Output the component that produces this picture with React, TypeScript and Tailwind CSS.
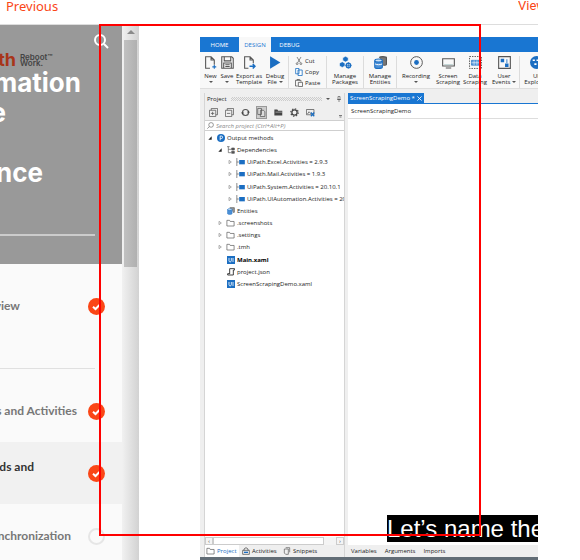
import type { ReactNode } from "react";

type IconProps = { children: ReactNode; className?: string; box?: string };

function Svg({ children, className = "size-3", box = "0 0 12 12" }: IconProps) {
  return (
    <svg viewBox={box} className={`shrink-0 ${className}`} fill="none" stroke="#555" aria-hidden="true">
      {children}
    </svg>
  );
}

const blue = "#1b6ec2";

const ribbonIcons = {
  fresh: (
    <Svg className="size-[13px]">
      <path d="M5.500 11.300h-4V.7h5l3 3V8M6.500.7v3h3" />
      <path d="M9.500 8.200v3.600M7.700 10h3.600" stroke={blue} />
    </Svg>
  ),
  save: (
    <Svg className="size-[13px]">
      <path d="M.7.7h9.200l1.400 1.400v9.200H.7z" />
      <path d="M3 .7v3.800h6V.7M2.500 11V6.500h7V11M4 8h4M4 9.700h4" />
    </Svg>
  ),
  exportTo: (
    <Svg className="size-[13px]">
      <path d="M5 11.300H1.500V.7h5l3 3v3M6.500.7v3h3" />
      <path d="M6 9.500h5M9 7.500l2 2-2 2" stroke={blue} strokeWidth="1.400" />
    </Svg>
  ),
  play: (
    <Svg className="size-[13px]">
      <path d="M1 .3 10.500 6 1 11.700z" fill={blue} stroke="none" />
    </Svg>
  ),
  packages: (
    <Svg className="size-[13px]">
      <path d="m6 .3 2.500 1.300v2.600L6 5.500 3.500 4.200V1.600zM3 5.300l2.500 1.300v2.600L3 10.500.5 9.200V6.600z" fill={blue} stroke="#fff" strokeWidth=".5" />
      <circle cx="8.700" cy="8.700" r="2" stroke={blue} strokeWidth="1.300" />
      <path d="M8.700 5.700v6M5.700 8.700h6" stroke={blue} strokeWidth=".7" />
    </Svg>
  ),
  entities: (
    <Svg className="size-[13px]">
      <path d="M5 1.500C5 .3 11.500.3 11.500 1.500v6c0 .8-2 1-3 1" fill="#777" />
      <path d="M.7 4.300v6c0 1.600 7 1.600 7 0v-6" fill="#4a8fd6" stroke={blue} />
      <ellipse cx="4.200" cy="4.200" rx="3.500" ry="1.400" fill="#cfe2f5" stroke={blue} />
      <path d="M1 7.300c1 1 5.500 1 6.500 0" stroke="#fff" strokeWidth=".9" />
    </Svg>
  ),
  record: (
    <Svg className="size-[13px]">
      <circle cx="6" cy="6" r="5.400" strokeWidth=".9" />
      <circle cx="6" cy="6" r="2.200" fill={blue} stroke="none" />
    </Svg>
  ),
  screen: (
    <Svg className="size-[13px]">
      <path d="M.6 2.500h10.800v6.800H.6zM3.500 11h5" />
      <path d="M2 8h8" stroke="#9bb" strokeWidth=".6" />
    </Svg>
  ),
  data: (
    <Svg className="size-[13px]">
      <path d="M.5.5h11v11H.5z" strokeDasharray="1.300 1" strokeWidth=".9" />
      <path d="M2.300 4h7.400v4.500H2.300z" fill="#5b9bdc" stroke={blue} strokeWidth=".6" />
      <path d="M4.700 4v4.500M7.300 4v4.500M2.300 6.200h7.400" stroke="#fff" strokeWidth=".5" />
    </Svg>
  ),
  events: (
    <Svg className="size-[13px]">
      <path d="M.6.6h10.800v10.800H.6z" />
      <path d="M2.500 2.500h3.200v3.200H2.500zM6.500 7h3.200v3.200H6.500z" fill={blue} stroke="none" />
      <path d="M8.200 3v3.500" stroke={blue} strokeWidth=".8" />
    </Svg>
  ),
  explorer: (
    <Svg className="size-[13px]">
      <circle cx="6" cy="6" r="6" fill={blue} stroke="none" />
      <path d="M2.500 4h2M6 4h2M4 7.500h2M7.500 7.500h2" stroke="#fff" strokeWidth="1.400" />
    </Svg>
  ),
};

function Caret() {
  return <span className="inline-block border-x-2 border-t-2 border-x-transparent border-t-[#555] align-middle" />;
}

type RibbonButtonProps = { icon: ReactNode; top: string; bottom?: string; caret?: boolean; width: string };

function RibbonButton({ icon, top, bottom, caret, width }: RibbonButtonProps) {
  return (
    <button className={`flex shrink-0 flex-col items-center text-center whitespace-nowrap ${width}`}>
      {icon}
      <span className="mt-1 h-[6px]">{top}</span>
      <span className="h-[6px]">
        {bottom} {caret && <Caret />}
      </span>
    </button>
  );
}

function Separator() {
  return <span className="h-8 w-px shrink-0 bg-[#dcdcdc]" />;
}

function Ribbon() {
  return (
    <div className="flex h-[37px] shrink-0 border-b border-[#dedede] bg-[#f8f8f8] pt-1 pl-[3px]">
      <RibbonButton icon={ribbonIcons.fresh} top="New" caret width="w-[15px]" />
      <RibbonButton icon={ribbonIcons.save} top="Save" caret width="w-[18px]" />
      <RibbonButton icon={ribbonIcons.exportTo} top="Export as" bottom="Template" width="w-[26px]" />
      <RibbonButton icon={ribbonIcons.play} top="Debug" bottom="File" caret width="w-[26px]" />
      <Separator />
      <div className="flex w-[37px] shrink-0 flex-col gap-[2px] pl-[6px]">
        <button className="flex h-[9px] items-center gap-[2px]">
          <Svg className="size-2">
            <path d="M3 0l5 8.500M9 0 4 8.500" />
            <circle cx="3.200" cy="10" r="1.400" />
            <circle cx="8.800" cy="10" r="1.400" />
          </Svg>
          Cut
        </button>
        <button className="flex h-[9px] items-center gap-[2px]">
          <Svg className="size-2">
            <path d="M1 .7h5v8H1zM4.500 3h6.300v8.300H4.500z" fill="#fff" stroke={blue} strokeWidth="1.200" />
          </Svg>
          Copy
        </button>
        <button className="flex h-[9px] items-center gap-[2px]">
          <Svg className="size-2">
            <path d="M4 10.500H.7V2H9v2M3 2V.7h3.700V2M5 5h6.300v6.300H5z" strokeWidth="1.200" />
          </Svg>
          Paste
        </button>
      </div>
      <Separator />
      <RibbonButton icon={ribbonIcons.packages} top="Manage" bottom="Packages" width="w-[36px]" />
      <Separator />
      <RibbonButton icon={ribbonIcons.entities} top="Manage" bottom="Entities" width="w-[32px]" />
      <Separator />
      <RibbonButton icon={ribbonIcons.record} top="Recording" caret width="w-[38px]" />
      <RibbonButton icon={ribbonIcons.screen} top="Screen" bottom="Scraping" width="w-[26px]" />
      <RibbonButton icon={ribbonIcons.data} top="Data" bottom="Scraping" width="w-[28px]" />
      <RibbonButton icon={ribbonIcons.events} top="User" bottom="Events" caret width="w-[30px]" />
      <Separator />
      <RibbonButton icon={ribbonIcons.explorer} top="UI" bottom="Explorer" width="w-[32px]" />
    </div>
  );
}

const treeIcons = {
  root: (
    <Svg className="size-2">
      <circle cx="6" cy="6" r="6" fill={blue} stroke="none" />
      <path d="M4.800 9.500V3h1.700a1.800 1.800 0 0 1 0 3.800H5" stroke="#fff" strokeWidth="1.300" />
    </Svg>
  ),
  deps: (
    <Svg className="size-2">
      <path d="M0 1h4M2 1v9h4M2 5h4" />
      <path d="M7 3h4v3H7zM7 8h4v3H7z" fill="#555" />
    </Svg>
  ),
  pkg: (
    <Svg className="h-2 w-[9px]" box="0 0 13 12">
      <path d="M1 0v12M1 6h3" />
      <path d="M4.500 3H13v6.500H4.500z" fill={blue} stroke="none" />
    </Svg>
  ),
  entity: (
    <Svg className="size-2">
      <path d="M4 1h7v7H9" fill="#999" />
      <path d="M.7 4v6c0 1.600 7 1.600 7 0V4z" fill="#4a8fd6" stroke={blue} strokeWidth=".6" />
      <ellipse cx="4.200" cy="4" rx="3.500" ry="1.400" fill="#cfe2f5" stroke={blue} />
    </Svg>
  ),
  folder: (
    <Svg className="h-2 w-[9px]">
      <path d="M.6 10.500V2h4l1 1.700h5.800v6.800z" />
    </Svg>
  ),
  flow: (
    <Svg className="size-2">
      <path d="M0 0h12v12H0z" fill={blue} stroke="none" />
      <path d="M3 3v4c0 2.500 3.500 2.500 3.500 0V3M9 3v6" stroke="#fff" strokeWidth="1.200" />
    </Svg>
  ),
  json: (
    <Svg className="size-2">
      <path d="M4 9V1h7.500v2H9.500v7.500H1V8.500h3" strokeWidth="1.400" stroke="#333" />
    </Svg>
  ),
};

type Row = { label: string; icon: ReactNode; pad: string; arrow?: "open" | "closed"; bold?: boolean };

const rows: Row[] = [
  { label: "Output methods", icon: treeIcons.root, pad: "pl-[3px]", arrow: "open" },
  { label: "Dependencies", icon: treeIcons.deps, pad: "pl-[13px]", arrow: "open" },
  { label: "UiPath.Excel.Activities = 2.9.3", icon: treeIcons.pkg, pad: "pl-[23px]", arrow: "closed" },
  { label: "UiPath.Mail.Activities = 1.9.3", icon: treeIcons.pkg, pad: "pl-[23px]", arrow: "closed" },
  { label: "UiPath.System.Activities = 20.10.1", icon: treeIcons.pkg, pad: "pl-[23px]", arrow: "closed" },
  { label: "UiPath.UIAutomation.Activities = 20", icon: treeIcons.pkg, pad: "pl-[23px]", arrow: "closed" },
  { label: "Entities", icon: treeIcons.entity, pad: "pl-[13px]" },
  { label: ".screenshots", icon: treeIcons.folder, pad: "pl-[13px]", arrow: "closed" },
  { label: ".settings", icon: treeIcons.folder, pad: "pl-[13px]", arrow: "closed" },
  { label: ".tmh", icon: treeIcons.folder, pad: "pl-[13px]", arrow: "closed" },
  { label: "Main.xaml", icon: treeIcons.flow, pad: "pl-[13px]", bold: true },
  { label: "project.json", icon: treeIcons.json, pad: "pl-[13px]" },
  { label: "ScreenScrapingDemo.xaml", icon: treeIcons.flow, pad: "pl-[13px]" },
];

function ProjectTree() {
  return (
    <ul className="flex h-[158px] flex-col justify-between overflow-hidden">
      {rows.map((row) => (
        <li key={row.label} className={`flex h-3 items-center whitespace-nowrap ${row.pad}`}>
          <Svg className="mr-1 size-1" box="0 0 6 6">
            {row.arrow === "open" && <path d="M5.500.5v5h-5z" fill="#222" stroke="none" />}
            {row.arrow === "closed" && <path d="M1.500.5 5 3 1.500 5.500z" stroke="#888" />}
          </Svg>
          <span className="mr-[2px] flex w-[9px] justify-center">{row.icon}</span>
          <span className={row.bold ? "font-bold text-black" : ""}>{row.label}</span>
        </li>
      ))}
    </ul>
  );
}

function ProjectPanel() {
  return (
    <section className="flex w-[141px] shrink-0 flex-col border-x border-[#d5d5d5]">
      <div className="flex h-[12px] shrink-0 items-center gap-1 px-[2px]">
        <span>Project</span>
        <span className="h-1 flex-1 bg-[conic-gradient(#ccc_25%,transparent_0_50%,#ccc_0_75%,transparent_0)] bg-[size:2px_2px]" />
        <Caret />
        <Svg className="ml-[2px] size-[6px]">
          <path d="M4 1h4v6H4zM2 7h8M6 7v5" strokeWidth="1.300" />
        </Svg>
      </div>
      <div className="flex h-[15px] shrink-0 items-center">
        <button aria-label="Expand all" className="flex w-4 justify-center">
          <Svg className="size-[9px]">
            <path d="M3 3V.6h8.400V9H9M.6 3H9v8.400H.6zM4.800 5v4.400M2.600 7.200H7" />
          </Svg>
        </button>
        <button aria-label="Collapse all" className="flex w-4 justify-center">
          <Svg className="size-[9px]">
            <path d="M3 3V.6h8.400V9H9M.6 3H9v8.400H.6zM2.600 7.200H7" />
          </Svg>
        </button>
        <button aria-label="Refresh" className="flex w-4 justify-center">
          <Svg className="size-[9px]">
            <path d="M2 6a4 4 0 0 1 8 0M10 6a4 4 0 0 1-8 0" strokeWidth="1.500" />
            <path d="M0 6h4L2 8.500zM8 6h4l-2-2.500z" fill="#444" stroke="none" />
          </Svg>
        </button>
        <button
          aria-label="Show all files"
          className="mx-[3px] flex h-[13px] w-[11px] items-center justify-center border border-[#999] bg-[#ccc]"
        >
          <Svg className="size-[9px]">
            <path d="M1 .6h5v8H1zM4.500 3h4l2 2v6.400h-6z" fill="#ddd" />
          </Svg>
        </button>
        <button aria-label="Open folder" className="flex w-4 justify-center">
          <Svg className="size-[9px]">
            <path d="M.5 2h4l1 1.500H11V10H.5z" fill="#444" stroke="none" />
            <path d="M2 5.500h9" stroke="#eee" strokeWidth=".7" />
          </Svg>
        </button>
        <button aria-label="Settings" className="flex w-4 justify-center">
          <Svg className="size-[9px]">
            <circle cx="6" cy="6" r="3.500" strokeWidth="1.700" stroke="#444" />
            <circle cx="6" cy="6" r="5" strokeWidth="1.500" strokeDasharray="1.900 2" stroke="#444" />
          </Svg>
        </button>
        <button aria-label="Remove unused screenshots" className="flex w-4 justify-center">
          <Svg className="size-[9px]">
            <path d="M.6 2h10v7H.6zM2 8l2-3 3 3" />
            <path d="m6.500 6 4.500 5M11 6l-4.500 5" stroke={blue} strokeWidth="1.600" />
          </Svg>
        </button>
        <span className="mr-[2px] ml-auto self-end pb-[2px]">
          <Svg className="size-[3px]" box="0 0 6 6">
            <path d="M0 1h6M1 4h4" strokeWidth="1.500" />
          </Svg>
        </span>
      </div>
      <label className="flex h-[11px] shrink-0 items-center gap-[2px] border-y border-[#cfcfcf] bg-white pl-[2px]">
        <Svg className="size-[7px]">
          <circle cx="7" cy="5" r="4" />
          <path d="M4 8 .5 11.500" />
        </Svg>
        <input
          aria-label="Search project"
          placeholder="Search project (Ctrl+Alt+P)"
          className="w-full min-w-0 italic outline-none placeholder:text-[#888]"
        />
      </label>
      <div className="flex-1 bg-white pt-px">
        <ProjectTree />
      </div>
      <div className="flex h-2 shrink-0 items-center justify-between bg-[#f4f4f4]">
        <span className="size-2 border border-[#ccc] text-center text-[5px] leading-[6px]">‹</span>
        <span className="mr-3 h-2 flex-1 border border-[#ccc] bg-white" />
        <span className="size-2 border border-[#ccc] text-center text-[5px] leading-[6px]">›</span>
      </div>
      <div className="flex h-[12px] shrink-0 items-center">
        <button className="flex h-full w-[34px] items-center gap-[2px] bg-white pl-px text-[#1b6ec2]">
          <Svg className="h-2 w-[9px]">
            <path d="M.6 10.500V2h4l1 1.700h5.800v6.800z" />
          </Svg>
          Project
        </button>
        <button className="flex w-[41px] items-center gap-[2px] pl-[3px]">
          <Svg className="size-2">
            <path d="M1 5h10v6H1zM3 5V3l3-2 3 2v2" strokeWidth="1.200" />
            <path d="M3 8h6" stroke={blue} strokeWidth="2" />
          </Svg>
          Activities
        </button>
        <button className="flex items-center gap-[2px] pl-[3px]">
          <Svg className="size-2">
            <path d="M4 1h6v7M2 3h6v8H4L2 9z" />
          </Svg>
          Snippets
        </button>
      </div>
    </section>
  );
}

function Designer() {
  return (
    <section className="ml-[3px] flex min-w-0 flex-1 flex-col">
      <div className="flex h-[11px] shrink-0 border-b border-[#1976d2]">
        <button className="flex w-[76px] items-center justify-between bg-[#1976d2] px-[2px] whitespace-nowrap text-white">
          ScreenScrapingDemo *
          <Svg className="size-[5px]">
            <path d="m1 1 10 10M11 1 1 11" stroke="#fff" strokeWidth="2" />
          </Svg>
        </button>
      </div>
      <div className="flex h-[15px] shrink-0 items-center border-b border-[#ddd] bg-white pl-[3px]">ScreenScrapingDemo</div>
      <div className="flex-1 bg-white" />
      <div className="flex h-[12px] shrink-0 items-center gap-2 pl-[3px]">
        <button>Variables</button>
        <button>Arguments</button>
        <button>Imports</button>
      </div>
    </section>
  );
}

function Studio() {
  return (
    <main className="relative mt-3 ml-[61px] flex min-w-0 flex-1 flex-col overflow-hidden bg-[#efefef] font-['Open_Sans',sans-serif] text-[6px] leading-[6px] text-[#222]">
      <nav className="flex h-[15px] shrink-0 bg-[#1976d2] text-white">
        <button className="w-[39px]">HOME</button>
        <button className="w-8 bg-[#f8f8f8] text-[#1976d2]">DESIGN</button>
        <button className="w-[37px]">DEBUG</button>
      </nav>
      <Ribbon />
      <div className="flex min-h-0 flex-1 pt-1 pl-1">
        <ProjectPanel />
        <Designer />
      </div>
      <div className="h-[3px] shrink-0 bg-[#626d76]" />
      <p className="absolute right-0 bottom-[18px] left-[187px] h-[27px] overflow-hidden bg-black font-['Liberation_Sans',sans-serif] text-2xl leading-[27px] whitespace-nowrap text-white">
        Let’s name the
      </p>
    </main>
  );
}

function Status({ done = true }: { done?: boolean }) {
  if (!done) {
    return <span className="size-[17px] shrink-0 rounded-full border-2 border-[#e6e6e6]" />;
  }
  return (
    <Svg className="size-[17px]" box="0 0 17 17">
      <circle cx="8.500" cy="8.500" r="8.500" fill="#fa4616" stroke="none" />
      <path d="m5 8.700 2.500 2.300 4.500-4.500" stroke="#fff" strokeWidth="2" />
    </Svg>
  );
}

type LessonProps = { label: string; textWidth: string; className: string; done?: boolean };

function Lesson({ label, textWidth, className, done }: LessonProps) {
  return (
    <a href="#lesson" className={`flex items-center justify-between pr-[17px] ${className}`}>
      <span className={`flex justify-end whitespace-nowrap ${textWidth}`}>{label}</span>
      <Status done={done} />
    </a>
  );
}

function Sidebar() {
  return (
    <aside className="flex w-[122px] shrink-0 flex-col overflow-hidden bg-[#fafafa] font-['Lato',sans-serif] text-[12px] leading-4 font-bold text-[#777]">
      <header className="flex h-[239px] shrink-0 flex-col bg-[#999] font-['Inter',sans-serif] font-bold">
        <button aria-label="Search" className="mt-2 mr-[13px] self-end">
          <Svg className="size-4" box="0 0 16 16">
            <circle cx="7" cy="7" r="5" stroke="#fff" strokeWidth="2" />
            <path d="m11 11 4 4" stroke="#fff" strokeWidth="2" />
          </Svg>
        </button>
        <div className="mt-[3px] flex h-4 items-center gap-1">
          <span className="flex w-4 justify-end text-lg leading-4 text-[#a8351a]">th</span>
          <span className="flex flex-col text-[8px] leading-[6px] font-semibold text-[#444]">
            <span>Reboot™</span>
            <span>Work.</span>
          </span>
        </div>
        <h1 className="text-[26px] leading-[30px] text-white">
          <span className="flex w-[81px] justify-end">mation</span>
          <span className="flex w-[6px] justify-end">e</span>
          <span className="mt-[30px] flex w-[43px] justify-end">nce</span>
        </h1>
        <div className="mt-[46px] mr-[27px] h-[2px] bg-[#ccc]" />
      </header>
      <Lesson label="view" textWidth="w-5" className="h-[84px]" />
      <div className="mt-5 mr-[27px] h-px shrink-0 bg-[#e0e0e0]" />
      <Lesson label="s and Activities" textWidth="w-[77px]" className="mt-[11px] h-[62px]" />
      <a href="#lesson" className="flex h-[62px] items-center justify-between bg-[#f1f1f1] pr-[17px] text-[#333]">
        <span className="flex w-[34px] justify-end pb-3 whitespace-nowrap">ods and</span>
        <Status />
      </a>
      <Lesson label="nchronization" textWidth="w-[71px]" className="h-[56px] pt-2" done={false} />
    </aside>
  );
}

function Scrollbar() {
  return (
    <div className="flex w-[17px] shrink-0 flex-col items-center bg-gradient-to-r from-[#f1f1f1] to-[#d2d2d2]">
      <span className="mt-[5px] mb-[6px] border-x-4 border-b-4 border-x-transparent border-b-[#8a8a8a]" />
      <span className="h-[227px] w-[13px] bg-gradient-to-r from-[#c1c1c1] to-[#b0b0b0]" />
    </div>
  );
}

export default function App() {
  return (
    <div className="relative flex min-h-screen flex-col overflow-hidden bg-white pr-[42px]">
      <nav className="flex h-[25px] shrink-0 justify-between overflow-hidden border-b border-[#ddd] pl-[6px] text-[13px] leading-3 text-[#fa4616]">
        <a href="#previous" className="font-['Noto_Sans',sans-serif]">
          Previous
        </a>
        <a href="#view" className="h-3 w-5 overflow-hidden font-['Roboto',sans-serif] whitespace-nowrap">
          View
        </a>
      </nav>
      <div className="flex flex-1">
        <Sidebar />
        <Scrollbar />
        <Studio />
      </div>
      <div className="pointer-events-none absolute top-6 left-[99px] h-[512px] w-[382px] border-2 border-[#f00]" />
    </div>
  );
}
